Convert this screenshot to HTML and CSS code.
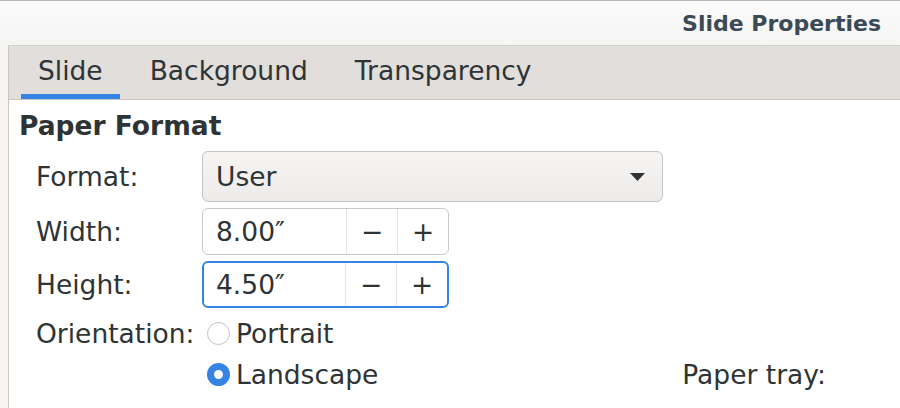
FILE: index.html
```html
<!DOCTYPE html>
<html lang="en">

<head>
    <meta charset="UTF-8">
    <title>Slide Properties</title>
    <link rel="stylesheet" href="styles.css">
</head>

<body>
    <div class="header">
        <h1>Slide Properties</h1>
    </div>

    <div class="notebook">
        <div class="tabs">
            <div class="tab active">Slide</div>
            <div class="tab">Background</div>
            <div class="tab">Transparency</div>
        </div>

        <div class="page">
            <h2>Paper Format</h2>
            <div class="form">
                <label>Format:</label>
                <div class="combo">
                    <span>User</span>
                    <svg width="15" height="8" viewBox="0 0 15 8"><path d="M0 0h15L7.5 8z" fill="#2e3436"/></svg>
                </div>

                <label>Width:</label>
                <div class="spin">
                    <span class="value">8.00″</span>
                    <span class="btn">−</span>
                    <span class="btn">+</span>
                </div>

                <label>Height:</label>
                <div class="spin focused">
                    <span class="value">4.50″</span>
                    <span class="btn">−</span>
                    <span class="btn">+</span>
                </div>

                <label>Orientation:</label>
                <div class="radio"><span class="dot"></span>Portrait</div>

                <span></span>
                <div class="radio-row">
                    <div class="radio"><span class="dot checked"></span>Landscape</div>
                    <label class="tray">Paper tray:</label>
                </div>
            </div>
        </div>
    </div>
</body>

</html>
```

FILE: styles.css
```css
body {
    margin: 0;
    font-family: 'DejaVu Sans', sans-serif;
    color: #2e3436;
    background-color: #f6f5f4;
    height: 408px;
    overflow: hidden;
    display: flex;
    flex-direction: column;
}

.header {
    flex: none;
    height: 44px;
    border-top: 1px solid #b6b6b3;
    background: linear-gradient(#fbfbfb, #f5f5f4);
    display: flex;
    justify-content: flex-end;
    align-items: center;
    padding-right: 19px;
}

.header h1 {
    margin: 0;
    font-size: 22px;
    font-weight: bold;
    color: #3c4a56;
}

.notebook {
    flex: 1;
    min-height: 0;
    margin-left: 8px;
    border-left: 1px solid #cdc7c2;
    border-top: 1px solid #d5d1cd;
    background-color: #fff;
    overflow: hidden;
}

.tabs {
    display: flex;
    gap: 13px;
    padding-left: 12px;
    height: 53px;
    background-color: #e1dedb;
    border-bottom: 1px solid #cdc7c2;
}

.tab {
    padding: 2px 17px 0;
    font-size: 26.5px;
    line-height: 46px;
    border-bottom: 5px solid transparent;
}

.tab.active {
    border-bottom-color: #3584e4;
}

.page {
    padding: 10px 0 0 10px;
}

.page h2 {
    margin: 0 0 9px;
    font-size: 26.5px;
    line-height: 32px;
}

.form {
    display: grid;
    grid-template-columns: 166px 1fr;
    row-gap: 6px;
    padding-left: 17px;
    font-size: 26.5px;
    align-items: center;
}

.combo {
    width: 461px;
    height: 51px;
    box-sizing: border-box;
    border: 1px solid #c9c4bf;
    border-radius: 6px;
    background: linear-gradient(#f6f5f4, #edebe9);
    display: flex;
    align-items: center;
    justify-content: space-between;
    padding: 0 17px 0 13px;
}

.spin {
    width: 247px;
    height: 47px;
    box-sizing: border-box;
    border: 1px solid #cdc7c2;
    border-radius: 6px;
    background-color: #fff;
    display: flex;
}

.spin.focused {
    border: 2px solid #3584e4;
}

.spin .value {
    flex: 1;
    padding-left: 13px;
    line-height: 45px;
}

.spin.focused .value {
    padding-left: 12px;
    line-height: 43px;
}

.spin .btn {
    width: 50px;
    border-left: 1px solid #e6e3e0;
    text-align: center;
    line-height: 45px;
}

.spin.focused .btn {
    line-height: 43px;
}

.radio {
    display: flex;
    align-items: center;
    height: 38px;
}

.dot {
    width: 23px;
    height: 23px;
    box-sizing: border-box;
    border: 1px solid #c6c2be;
    border-radius: 50%;
    background-color: #fff;
    margin: 0 6px 0 5px;
}

.dot.checked {
    border: 7px solid #3584e4;
}

.radio-row {
    display: flex;
    justify-content: space-between;
    align-items: center;
    margin-top: -3px;
}

.tray {
    margin-right: 74px;
}
```
